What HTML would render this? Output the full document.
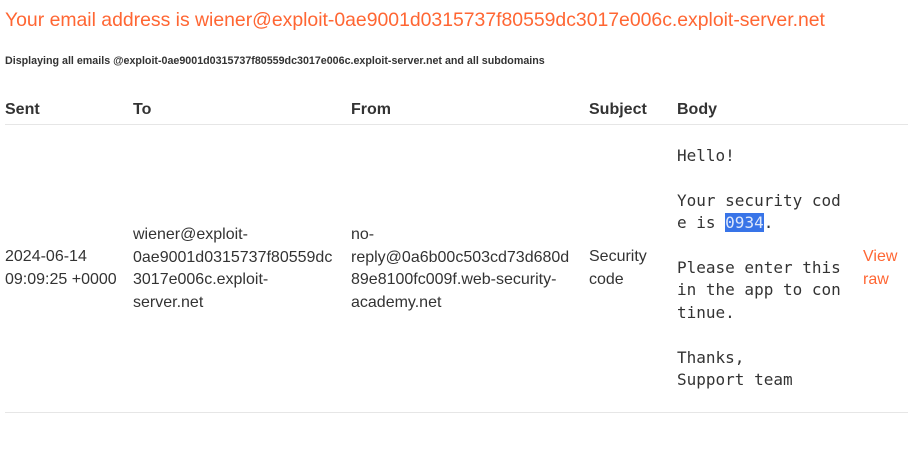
<!DOCTYPE html>
<html><head><style>
body{margin:0;width:908px;height:450px;background:#fff;font-family:"Liberation Sans",sans-serif;color:#333;position:relative;overflow:hidden}
.a{position:absolute;white-space:nowrap}
h1{position:absolute;left:5px;top:9px;margin:0;font-weight:normal;font-size:19.4px;color:#ff6633;white-space:nowrap}
.sub{left:5px;top:55px;font-size:10.7px;font-weight:bold;color:#333}
.th{top:101px;font-size:16px;font-weight:bold;color:#333}
.td{font-size:16px;line-height:22.5px;color:#333}
.line{position:absolute;left:5px;width:903px;height:1px;background:#e6e6e6}
pre{position:absolute;left:677px;top:145px;margin:0;font-family:"DejaVu Sans Mono",monospace;font-size:16px;line-height:22.4px;color:#333}
.hl{background:#3874e8;color:#dfe8fb}
</style></head><body>
<h1>Your email address is wiener@exploit-0ae9001d0315737f80559dc3017e006c.exploit-server.net</h1>
<div class="a sub">Displaying all emails @exploit-0ae9001d0315737f80559dc3017e006c.exploit-server.net and all subdomains</div>
<div class="a th" style="left:5px">Sent</div>
<div class="a th" style="left:133px">To</div>
<div class="a th" style="left:351px">From</div>
<div class="a th" style="left:589px">Subject</div>
<div class="a th" style="left:677px">Body</div>
<div class="line" style="top:124px"></div>
<div class="a td" style="left:5px;top:246px">2024-06-14<br>09:09:25 +0000</div>
<div class="a td" style="left:133px;top:224px">wiener@exploit-<br>0ae9001d0315737f80559dc<br>3017e006c.exploit-<br>server.net</div>
<div class="a td" style="left:351px;top:224px">no-<br>reply@0a6b00c503cd73d680d<br>89e8100fc009f.web-security-<br>academy.net</div>
<div class="a td" style="left:589px;top:246px">Security<br>code</div>
<pre>Hello!

Your security cod
e is <span class="hl">0934</span>.

Please enter this
in the app to con
tinue.

Thanks,
Support team</pre>
<div class="a td" style="left:863px;top:246px;color:#ff6633">View<br>raw</div>
<div class="line" style="top:412px"></div>
</body></html>
